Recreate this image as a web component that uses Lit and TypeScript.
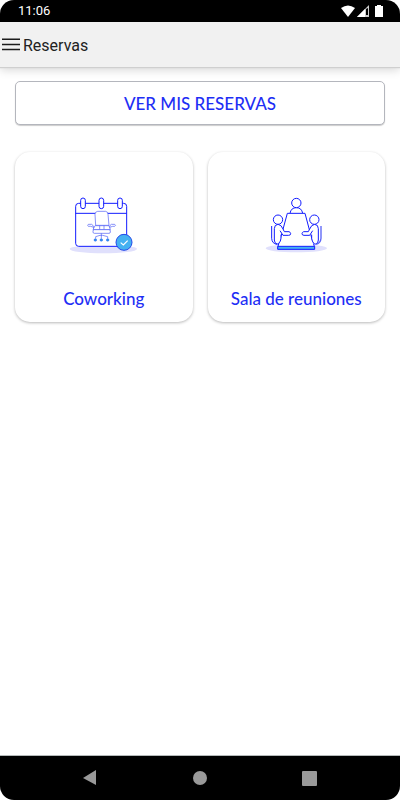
import { LitElement, html, css, svg } from "lit";
import { customElement } from "lit/decorators.js";

// Monthly planner with an office chair and a confirmation badge
const coworkingIcon = html`
  <svg class="art" viewBox="-3 0 270 225" aria-hidden="true">
    <ellipse cx="130" cy="192" rx="101" ry="13" fill="#e0e0fc" />
    <g fill="#fff" stroke="#121cff" stroke-width="3">
      <rect x="47" y="55" width="153" height="129" rx="9" />
      <path d="M47 85H200" fill="none" />
      ${[69, 124, 180].map(
        (cx) => svg`<rect x=${cx - 7} y="39" width="14" height="32" rx="7" />`
      )}
    </g>
    <g fill="#fff" stroke="#4c5af6" stroke-width="2" stroke-linejoin="round">
      <path d="M107 121L105 88Q105 80 113 79H137Q144 80 144 88L147 121Z" />
      <path d="M101 135V127L92 124H85Q81 121 85 118H95Q99 119 101 127M149 135V127L158 124H164Q169 121 164 118H154Q150 119 148 127" />
      <path d="M105 122H147L151 134H99ZM119 122V133M132 122V133" />
      <rect x="99" y="134" width="52" height="11" rx="4" />
      <path d="M124 145V161M107 161V155L120 151H128L143 155V161" fill="none" />
    </g>
    <g fill="#2995f0" stroke="#1a45f0" stroke-width="1">
      ${[106, 124, 143].map((cx) => svg`<circle cx=${cx} cy="165" r="4" />`)}
    </g>
    <circle cx="192" cy="172" r="24" fill="#45b1f1" stroke="#2348ea" stroke-width="3" />
    <path d="M182 173L190 180L203 167" fill="none" stroke="#fff" stroke-width="3.5" />
  </svg>
`;

// Three people gathered round a meeting table
const meetingIcon = html`
  <svg class="art" viewBox="-12 0 270 225" aria-hidden="true">
    <ellipse cx="124" cy="190" rx="92" ry="12" fill="#e0e0fc" />
    <g fill="#fff" stroke="#121cff" stroke-width="3" stroke-linejoin="round">
      <path d="M105 85Q108 68 124 68Q140 68 143 85" />
      <circle cx="124" cy="54" r="14" />
      <path d="M97 85H150L180 184H68Z" stroke="none" />
      <path d="M97 85H150L166 145L178 184M97 85L82 140L69 184" fill="none" />
      <path d="M58 170V131Q58 119 69 118Q79 119 84 132L88 140H102Q107 142 107 146Q107 151 101 151H82L76 138L78 151Q78 159 76 172Q74 178 68 178Q58 177 58 170Z" stroke="none" />
      <path d="M58 165V131Q58 119 69 118Q79 119 84 132L88 140H102Q107 142 107 146Q107 151 101 151H84L75 137M78 149V160Q78 168 70 177H66Q58 175 58 165" fill="none" />
      <path d="M190 170V131Q190 119 179 118Q169 119 164 132L160 140H146Q141 142 141 146Q141 151 147 151H166L172 138L170 151Q170 159 172 172Q174 178 180 178Q190 177 190 170Z" stroke="none" />
      <path d="M190 165V131Q190 119 179 118Q169 119 164 132L160 140H146Q141 142 141 146Q141 151 147 151H164L173 137M170 149V160Q170 168 178 177H182Q190 175 190 165" fill="none" />
      <circle cx="69" cy="104" r="14" />
      <circle cx="178" cy="104" r="14" />
      <path d="M50 123V160Q51 176 66 178" fill="none" />
      <path d="M198 123V160Q197 176 182 178" fill="none" stroke="#5a64f7" stroke-width="4" />
      <rect x="68" y="184" width="111" height="9" fill="#45b1f1" />
    </g>
  </svg>
`;

@customElement("app-root")
export class AppRoot extends LitElement {
  static styles = css`
    :host {
      display: flex;
      flex-direction: column;
      min-height: 100vh;
      box-sizing: border-box;
      border-radius: 14px;
      overflow: hidden;
      background: #fff;
      font-family: Roboto, sans-serif;
    }
    .status {
      display: flex;
      align-items: center;
      justify-content: space-between;
      height: 22px;
      padding: 0 16px 0 18px;
      background: #000;
      color: #fff;
      font-size: 13px;
      line-height: 24px;
    }
    .signals {
      display: block;
      width: 43px;
      height: 14px;
    }
    .toolbar {
      display: flex;
      align-items: center;
      height: 45px;
      padding: 0 2px;
      gap: 2px;
      background: #f1f1f1;
      box-shadow: 0 1px 1px #cfcfcf, 0 3px 9px rgba(0, 0, 0, 0.16);
    }
    h1 {
      margin: 0;
      padding-top: 2px;
      color: #222;
      font-size: 16px;
      font-weight: 400;
      line-height: 21px;
    }
    button {
      padding: 0;
      border: 0;
      background: none;
      font: inherit;
      cursor: pointer;
    }
    button svg {
      display: block;
    }
    main {
      flex: 1;
      padding: 14px 15px;
    }
    .all,
    .card {
      box-sizing: border-box;
      width: 100%;
      background: #fff;
      color: #1f2ff5;
      font-family: Lato, sans-serif;
      font-size: 17px;
      font-weight: 500;
      line-height: 22px;
    }
    .all {
      height: 44px;
      padding-top: 2px;
      border: 1px solid #b4b6bd;
      border-radius: 5px;
      box-shadow: 0 1px 1px rgba(0, 0, 0, 0.2);
    }
    .grid {
      display: grid;
      grid-template-columns: 1fr 1fr;
      gap: 15px;
      margin-top: 27px;
    }
    .card {
      display: flex;
      flex-direction: column;
      align-items: center;
      gap: 28px;
      padding: 33px 0 12px;
      border-radius: 15px;
      box-shadow: 0 1px 3px rgba(0, 0, 0, 0.28);
    }
    .art {
      width: 90px;
      height: 75px;
    }
    .nav {
      display: flex;
      justify-content: space-between;
      align-items: center;
      height: 44px;
      padding: 0 83px;
      border-top: 1px solid #b5baba;
      background: #000;
    }
  `;

  render() {
    return html`
      <div class="status">
        <span>11:06</span>
        <svg class="signals" viewBox="0 0 43 14" aria-hidden="true">
          <path d="M0 4Q7 -1 14 4L7 13Z" fill="#fff" />
          <path d="M16 13L28 1V13Z" fill="#ccc" />
          <path d="M16 13L24 5V13Z" fill="#fff" />
          <path d="M25 5L27 4V11H25Z" fill="#000" />
          <path d="M34 2H36V1H40V2H42V13H34Z" fill="#fff" />
        </svg>
      </div>
      <header class="toolbar">
        <button aria-label="Abrir menú">
          <svg width="19" height="21" viewBox="0 0 19 21" fill="none" stroke="#1c1c1c" stroke-width="1.5">
            <path d="M0 5.2H18M0 10.4H18M0 15.5H18" />
          </svg>
        </button>
        <h1>Reservas</h1>
      </header>
      <main>
        <button class="all">VER MIS RESERVAS</button>
        <div class="grid">
          <button class="card">${coworkingIcon}<span>Coworking</span></button>
          <button class="card">${meetingIcon}<span>Sala de reuniones</span></button>
        </div>
      </main>
      <nav class="nav">
        <button aria-label="Atrás">
          <svg width="14" height="16" viewBox="0 0 14 16" fill="#999">
            <path d="M0 8L13 0V15Z" />
          </svg>
        </button>
        <button aria-label="Inicio">
          <svg width="14" height="14" viewBox="0 0 14 14" fill="#999">
            <circle cx="7" cy="7" r="7" />
          </svg>
        </button>
        <button aria-label="Recientes">
          <svg width="15" height="15" viewBox="0 0 15 15" fill="#999">
            <rect width="15" height="15" rx="1" />
          </svg>
        </button>
      </nav>
    `;
  }
}
